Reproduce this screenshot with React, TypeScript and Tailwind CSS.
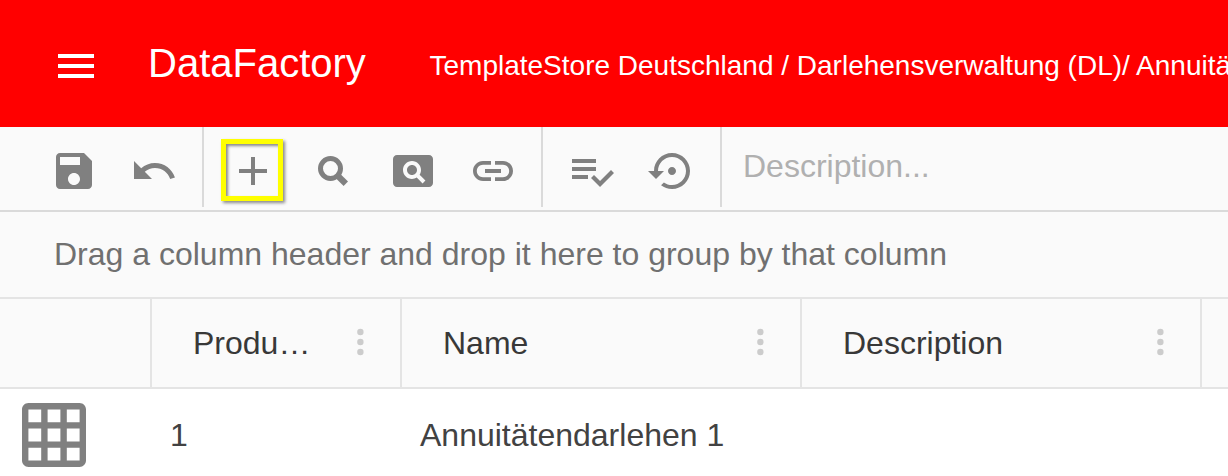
import React from "react";

type IconProps = { d: string; className?: string; viewBox?: string };

function Icon({ d, className = "size-12", viewBox = "0 0 24 24" }: IconProps) {
  return (
    <svg viewBox={viewBox} fill="currentColor" className={`shrink-0 ${className}`} aria-hidden="true">
      <path d={d} />
    </svg>
  );
}

const icons = {
  menu: "M3 18h18v-2H3v2zm0-5h18v-2H3v2zm0-7v2h18V6H3z",
  save: "M17 3H5c-1.11 0-2 .9-2 2v14c0 1.1.89 2 2 2h14c1.1 0 2-.9 2-2V7l-4-4zm-5 16c-1.66 0-3-1.34-3-3s1.34-3 3-3 3 1.34 3 3-1.34 3-3 3zm3-10H5V5h10v4z",
  undo: "M12.5 8c-2.65 0-5.05.99-6.9 2.6L2 7v9h9l-3.62-3.62c1.39-1.16 3.16-1.88 5.12-1.88 3.54 0 6.55 2.31 7.6 5.5l2.37-.78C21.08 11.03 17.15 8 12.5 8z",
  add: "M19 13h-6v6h-2v-6H5v-2h6V5h2v6h6v2z",
  pageview:
    "M11.5 9C10.12 9 9 10.12 9 11.5s1.12 2.5 2.5 2.5 2.5-1.12 2.5-2.5S12.88 9 11.5 9zM20 4H4c-1.1 0-2 .9-2 2v12c0 1.1.9 2 2 2h16c1.1 0 2-.9 2-2V6c0-1.1-.9-2-2-2zm-3.21 14.21l-2.91-2.91c-.69.44-1.51.7-2.39.7C9.01 16 7 13.99 7 11.5S9.01 7 11.5 7 16 9.01 16 11.5c0 .88-.26 1.69-.7 2.39l2.91 2.9-1.42 1.42z",
  link: "M3.9 12c0-1.71 1.39-3.1 3.1-3.1h4V7H7c-2.76 0-5 2.24-5 5s2.24 5 5 5h4v-1.9H7c-1.71 0-3.1-1.39-3.1-3.1zM8 13h8v-2H8v2zm9-6h-4v1.9h4c1.71 0 3.1 1.39 3.1 3.1s-1.39 3.1-3.1 3.1h-4V17h4c2.76 0 5-2.24 5-5s-2.24-5-5-5z",
  check: "M14 10H2v2h12v-2zm0-4H2v2h12V6zM2 16h8v-2H2v2zm19.5-4.5L23 13l-6.99 7-4.51-4.5L13 14l3.01 3 5.49-5.5z",
  restore:
    "M14 12c0-1.1-.9-2-2-2s-2 .9-2 2 .9 2 2 2 2-.9 2-2zm-2-9c-4.97 0-9 4.03-9 9H0l4 4 4-4H5c0-3.87 3.13-7 7-7s7 3.13 7 7-3.13 7-7 7c-1.51 0-2.91-.49-4.06-1.3l-1.42 1.44C8.04 20.3 9.94 21 12 21c4.97 0 9-4.03 9-9s-4.03-9-9-9z",
  grid: "M20 2H4c-1.1 0-2 .9-2 2v16c0 1.1.9 2 2 2h16c1.1 0 2-.9 2-2V4c0-1.1-.9-2-2-2zM8 20H4v-4h4v4zm0-6H4v-4h4v4zm0-6H4V4h4v4zm6 12h-4v-4h4v4zm0-6h-4v-4h4v4zm0-6h-4V4h4v4zm6 12h-4v-4h4v4zm0-6h-4v-4h4v4zm0-6h-4V4h4v4z",
};

function SearchIcon() {
  return (
    <svg viewBox="0 0 48 48" className="size-12 shrink-0" fill="none" stroke="currentColor" aria-hidden="true">
      <circle cx="21.5" cy="21.5" r="10" strokeWidth="5" />
      <path d="M28 28l8.8 8.8" strokeWidth="6.2" />
    </svg>
  );
}

function HeaderCell({ label, width }: { label: string; width: string }) {
  return (
    <div className={`flex shrink-0 items-center justify-between border-r-2 border-[#e4e4e4] pr-[34px] pl-[41px] ${width}`}>
      <span>{label}</span>
      <svg viewBox="0 0 10 28" className="mb-0.5 h-7 w-2.5 fill-[#cccccc]" aria-hidden="true">
        <circle cx="4.4" cy="4" r="3.2" />
        <circle cx="4.4" cy="14" r="3.2" />
        <circle cx="4.4" cy="24" r="3.2" />
      </svg>
    </div>
  );
}

export default function App() {
  return (
    <div className="flex h-[476px] w-[1228px] flex-col overflow-hidden bg-white font-['Liberation_Sans',Arial,sans-serif] text-[32px] leading-9 whitespace-nowrap">
      <header className="flex h-[127px] shrink-0 items-center bg-[#ff0000] pl-[52px] text-white">
        <Icon d={icons.menu} className="mt-[5px] size-12" />
        <h1 className="mb-0.5 ml-12 w-[281.5px] shrink-0 text-[40px] leading-none">DataFactory</h1>
        <span className="mt-[5px] text-[28px]">TemplateStore Deutschland / Darlehensverwaltung (DL)/ Annuitätendarlehen</span>
      </header>

      <div className="flex h-[85px] shrink-0 border-b-2 border-[#dadada] bg-[#fafafa] text-[#808080]">
        <div className="flex h-[80px] w-[204px] gap-8 border-r-2 border-[#dadada] pt-5 pl-[50px]">
          <Icon d={icons.save} />
          <Icon d={icons.undo} />
        </div>
        <div className="flex h-[80px] w-[339px] gap-8 border-r-2 border-[#dadada] pt-5 pl-[25px]">
          <div className="relative size-12 shrink-0">
            <Icon d={icons.add} />
            <span className="absolute -top-2 -left-2 size-[62px] border-5 border-[#ffff00] shadow-[2px_2px_3px_rgba(0,0,0,0.45),inset_2px_2px_3px_rgba(0,0,0,0.45)]" />
          </div>
          <SearchIcon />
          <Icon d={icons.pageview} />
          <Icon d={icons.link} />
        </div>
        <div className="flex h-[80px] w-[179px] gap-8 border-r-2 border-[#dadada] pt-5 pl-[25px]">
          <Icon d={icons.check} />
          <Icon d={icons.restore} />
        </div>
        <div className="flex h-[78px] items-center pl-[21px] text-[#b0b0b0]">Description...</div>
      </div>

      <div className="flex h-[85px] shrink-0 items-center bg-[#fafafa] pb-0.5 pl-[54px] text-[#707070]">
        Drag a column header and drop it here to group by that column
      </div>

      <div className="flex h-[92px] shrink-0 border-y-2 border-[#e4e4e4] bg-[#fafafa] text-[#383838]">
        <div className="w-[152px] shrink-0 border-r-2 border-[#e4e4e4]" />
        <HeaderCell label="Produ…" width="w-[250px]" />
        <HeaderCell label="Name" width="w-[400px]" />
        <HeaderCell label="Description" width="w-[400px]" />
      </div>

      <div className="flex h-[92px] shrink-0 items-center text-[#424242]">
        <div className="w-[170px] shrink-0 pl-[22px] text-[#808080]">
          <Icon d={icons.grid} viewBox="2 2 20 20" className="size-16" />
        </div>
        <div className="w-[250px] shrink-0">1</div>
        <div>Annuitätendarlehen 1</div>
      </div>
    </div>
  );
}
